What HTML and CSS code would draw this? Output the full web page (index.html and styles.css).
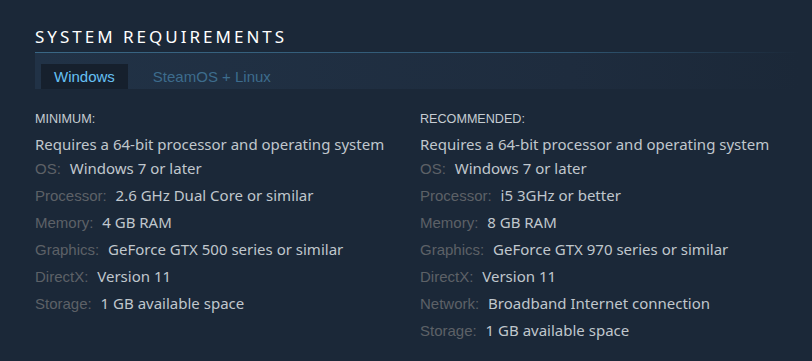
FILE: index.html
```html
<!DOCTYPE html>
<html lang="en">
<head>
    <meta charset="UTF-8">
    <meta name="viewport" content="width=device-width, initial-scale=1.0">
    <title>System Requirements</title>
    <link rel="stylesheet" href="styles.css">
</head>
<body>

<div class="sysreq">
    <h2>System Requirements</h2>
    <div class="rule"></div>
    <div class="tabs">
        <div class="tab active">Windows</div>
        <div class="tab">SteamOS + Linux</div>
    </div>

    <div class="cols">
        <div class="col">
            <div class="col-title">Minimum:</div>
            <ul class="specs">
                <li class="note">Requires a 64-bit processor and operating system</li>
                <li><span class="lbl">OS:</span> Windows 7 or later</li>
                <li><span class="lbl">Processor:</span> 2.6 GHz Dual Core or similar</li>
                <li><span class="lbl">Memory:</span> 4 GB RAM</li>
                <li><span class="lbl">Graphics:</span> GeForce GTX 500 series or similar</li>
                <li><span class="lbl">DirectX:</span> Version 11</li>
                <li><span class="lbl">Storage:</span> 1 GB available space</li>
            </ul>
        </div>
        <div class="col">
            <div class="col-title">Recommended:</div>
            <ul class="specs">
                <li class="note">Requires a 64-bit processor and operating system</li>
                <li><span class="lbl">OS:</span> Windows 7 or later</li>
                <li><span class="lbl">Processor:</span> i5 3GHz or better</li>
                <li><span class="lbl">Memory:</span> 8 GB RAM</li>
                <li><span class="lbl">Graphics:</span> GeForce GTX 970 series or similar</li>
                <li><span class="lbl">DirectX:</span> Version 11</li>
                <li><span class="lbl">Network:</span> Broadband Internet connection</li>
                <li><span class="lbl">Storage:</span> 1 GB available space</li>
            </ul>
        </div>
    </div>
</div>

</body>
</html>
```

FILE: styles.css
```css
/* steam store - system requirements block */
body { margin: 0; background-color: #1b2838; font-family: "Noto Sans", sans-serif; }
.sysreq { padding: 0 12px 0 35px; }
.sysreq h2 { margin: 27px 0 5px; font-size: 17px; line-height: 20px; font-weight: normal; letter-spacing: 3px; text-transform: uppercase; color: #fff; }
.rule { height: 1px; background: linear-gradient(to right, #3a6785 0%, #2f5672 70%, rgba(47, 86, 114, 0) 100%); }
.tabs { display: flex; padding: 11px 0 0 6px; background: linear-gradient(to right, #213246 0%, #1e2c3e 70%, #1b2838 100%); }
.tab { padding: 0 13px; height: 25px; line-height: 25px; font-family: "Liberation Sans", Arial, sans-serif; font-size: 15px; color: #3d6c8d; margin-right: 12px; }
.tab.active { background-color: #16202d; color: #66c0f4; }
.cols { display: grid; grid-template-columns: 385px 1fr; padding-top: 22px; }
.col-title { font-family: "Liberation Sans", Arial, sans-serif; font-size: 12.6px; line-height: 16px; text-transform: uppercase; color: #c6ccd2; margin-bottom: 6px; }
.specs { list-style: none; margin: 0; padding: 0; }
.specs li { font-size: 15px; line-height: 27px; color: #c0c7cd; white-space: nowrap; }
.specs li.note { line-height: 22px; }
.lbl { font-family: "Liberation Sans", Arial, sans-serif; font-size: 15px; color: #5d6167; margin-right: 5px; }
```
